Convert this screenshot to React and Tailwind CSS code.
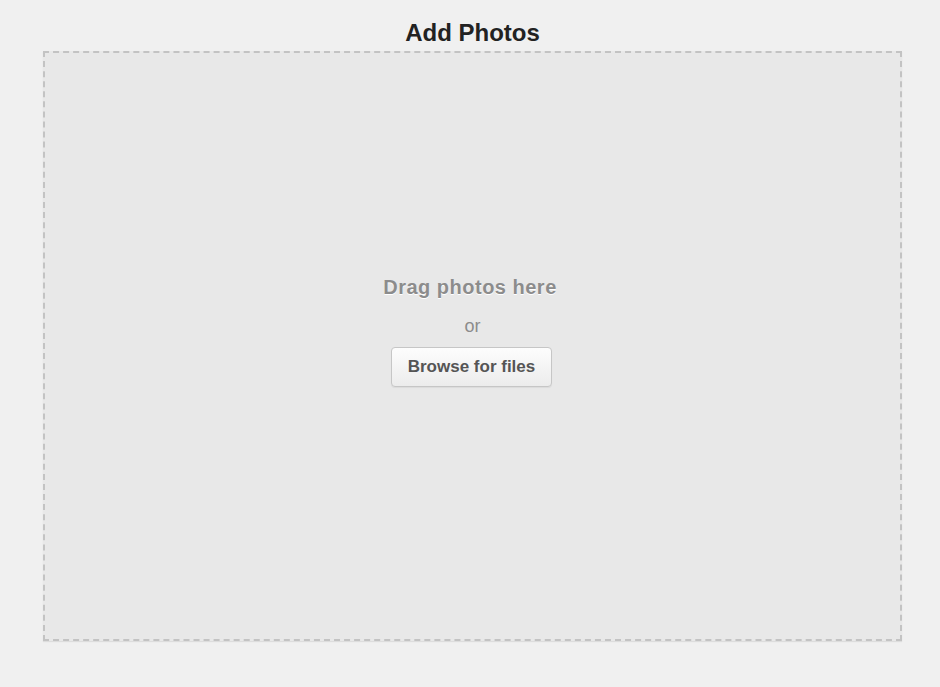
import React from 'react';

const font = { fontFamily: '"Liberation Sans", Arial, sans-serif' };

export default function App() {
    return (
        <div className="min-h-[687px] w-[940px] bg-[#f0f0f0]" style={font}>
            <div className="ml-[43px] w-[859px] pt-[19px]">
                <h1 className="text-center text-[24px] leading-[28px] font-bold text-[#222]">Add Photos</h1>
                <div className="mt-[4px] h-[590px] border-2 border-dashed border-[#c3c3c3] bg-[#e8e8e8] shadow-[0_1px_1px_rgba(0,0,0,0.08)]">
                    <div className="flex flex-col items-center pt-[222px]">
                        <p className="pr-[5px] text-[20px] leading-[24px] font-bold tracking-[0.5px] text-[#8c8c8c] [text-shadow:0_1px_0_#fff]">Drag photos here</p>
                        <p className="mt-[15px] text-[18px] leading-[24px] text-[#8c8c8c]">or</p>
                        <button className="mt-[9px] mr-[2px] h-[40px] w-[161px] rounded-[4px] border border-[#c6c6c6] bg-gradient-to-b from-[#fdfdfd] to-[#ececec] text-[17px] font-bold text-[#555] shadow-[0_1px_1px_rgba(0,0,0,0.06)]">
                            Browse for files
                        </button>
                    </div>
                </div>
            </div>
        </div>
    );
}
